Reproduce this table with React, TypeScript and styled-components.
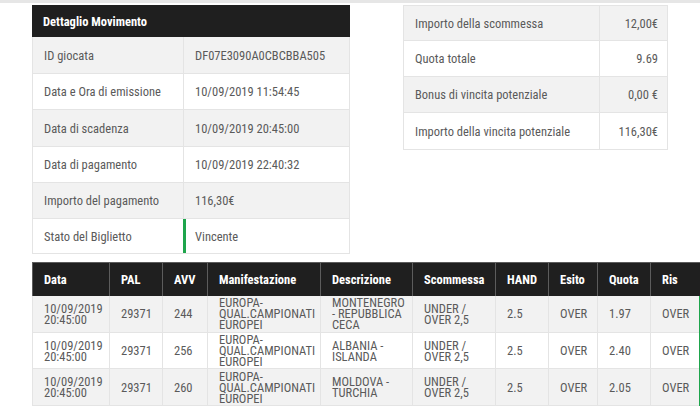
import React from "react";
import styled, { createGlobalStyle } from "styled-components";

const Global = createGlobalStyle`
  html, body { margin: 0; padding: 0; background: #ffffff; }
  body {
    font-family: "Roboto Condensed", "Liberation Sans Narrow", "DejaVu Sans Condensed", Roboto, sans-serif;
    color: #5a5a5a;
    width: 700px;
    height: 417px;
    overflow: hidden;
  }
`;

const Page = styled.div`
  width: 700px;
  height: 417px;
  overflow: hidden;
`;

const TopBand = styled.div`
  height: 3px;
  background: #e6e6e6;
`;

const Top = styled.div`
  display: flex;
  align-items: flex-start;
  gap: 53px;
  padding: 2px 0 0 32px;
`;

const InfoTable = styled.div<{ $width: number }>`
  width: ${(p) => p.$width}px;
  box-sizing: border-box;
  border: 1px solid #e4e4e4;
  border-top: none;
`;

const TitleBar = styled.div`
  height: 32px;
  background: #1f1f1f;
  color: #ffffff;
  font-weight: 700;
  font-size: 12.5px;
  display: flex;
  align-items: center;
  padding-left: 11px;
  margin: 0 -1px;
`;

const InfoRow = styled.div<{ $grey: boolean; $h: number; $cols: string; $first?: boolean }>`
  display: grid;
  grid-template-columns: ${(p) => p.$cols};
  height: ${(p) => p.$h}px;
  background: ${(p) => (p.$grey ? "#f2f2f2" : "#ffffff")};
  border-top: ${(p) => (p.$first ? "1px solid #e4e4e4" : "none")};
  border-bottom: 1px solid #e4e4e4;
  box-sizing: border-box;
  font-size: 12.5px;
  &:last-child { border-bottom: none; }
`;

const InfoCell = styled.div<{ $right?: boolean; $accent?: boolean; $divider?: boolean }>`
  display: flex;
  align-items: center;
  justify-content: ${(p) => (p.$right ? "flex-end" : "flex-start")};
  padding: ${(p) => (p.$right ? "0 9px 0 0" : p.$accent ? "0 0 0 9px" : "0 0 0 11px")};
  border-left: ${(p) => (p.$accent ? "3px solid #1ea54c" : p.$divider ? "1px solid #e4e4e4" : "none")};
  white-space: nowrap;
`;

const Grid = styled.table`
  margin: 8px 0 0 32px;
  border-collapse: collapse;
  table-layout: fixed;
  width: 668px;
  font-size: 12.5px;
`;

const Th = styled.th<{ $w: number }>`
  width: ${(p) => p.$w}px;
  height: 33px;
  box-sizing: border-box;
  background: #1f1f1f;
  color: #ffffff;
  font-weight: 700;
  text-align: left;
  padding: 0 0 0 11px;
  border: 1px solid #5c5c5c;
  border-bottom: none;
  white-space: nowrap;
`;

const Tr = styled.tr<{ $grey: boolean }>`
  background: ${(p) => (p.$grey ? "#f2f2f2" : "#ffffff")};
`;

const Td = styled.td<{ $h: number }>`
  height: ${(p) => p.$h}px;
  box-sizing: border-box;
  padding: 0 6px 0 11px;
  line-height: 11px;
  font-size: 12.5px;
  vertical-align: middle;
  border: 1px solid #e4e4e4;
  border-top: none;
  &:last-child {
    border-right: 3px solid #1ea54c;
  }
`;

const leftRows: [string, string][] = [
  ["ID giocata", "DF07E3090A0CBCBBA505"],
  ["Data e Ora di emissione", "10/09/2019 11:54:45"],
  ["Data di scadenza", "10/09/2019 20:45:00"],
  ["Data di pagamento", "10/09/2019 22:40:32"],
  ["Importo del pagamento", "116,30€"],
  ["Stato del Biglietto", "Vincente"],
];

const rightRows: [string, string][] = [
  ["Importo della scommessa", "12,00€"],
  ["Quota totale", "9.69"],
  ["Bonus di vincita potenziale", "0,00 €"],
  ["Importo della vincita potenziale", "116,30€"],
];

const columns: [string, number][] = [
  ["Data", 77],
  ["PAL", 53],
  ["AVV", 45],
  ["Manifestazione", 113],
  ["Descrizione", 92],
  ["Scommessa", 83],
  ["HAND", 53],
  ["Esito", 49],
  ["Quota", 53],
  ["Ris", 50],
];

const events = [
  { d: "10/09/2019 20:45:00", pal: "29371", avv: "244", man: "EUROPA-QUAL.CAMPIONATI EUROPEI", desc: "MONTENEGRO - REPUBBLICA CECA", q: "1.97" },
  { d: "10/09/2019 20:45:00", pal: "29371", avv: "256", man: "EUROPA-QUAL.CAMPIONATI EUROPEI", desc: "ALBANIA - ISLANDA", q: "2.40" },
  { d: "10/09/2019 20:45:00", pal: "29371", avv: "260", man: "EUROPA-QUAL.CAMPIONATI EUROPEI", desc: "MOLDOVA - TURCHIA", q: "2.05" },
];

const rowHeights = [37, 36, 37];
const leftHeights = [37, 36, 37, 36, 36, 34];

export default function App() {
  return (
    <Page>
      <Global />
      <TopBand />
      <Top>
        <InfoTable $width={318}>
          <TitleBar>Dettaglio Movimento</TitleBar>
          {leftRows.map(([k, v], i) => (
            <InfoRow key={k} $grey={i % 2 === 0} $h={leftHeights[i]} $cols="150px 1fr">
              <InfoCell>{k}</InfoCell>
              <InfoCell $divider={i !== 5} $accent={i === 5}>{v}</InfoCell>
            </InfoRow>
          ))}
        </InfoTable>
        <InfoTable $width={265}>
          {rightRows.map(([k, v], i) => (
            <InfoRow key={k} $grey={i % 2 === 0} $h={36} $cols="195px 1fr" $first={i === 0}>
              <InfoCell>{k}</InfoCell>
              <InfoCell $right $divider>{v}</InfoCell>
            </InfoRow>
          ))}
        </InfoTable>
      </Top>
      <Grid>
        <thead>
          <tr>
            {columns.map(([c, w]) => (
              <Th key={c} $w={w}>{c}</Th>
            ))}
          </tr>
        </thead>
        <tbody>
          {events.map((e, i) => (
            <Tr key={e.avv} $grey={i % 2 === 0}>
              <Td $h={rowHeights[i]}>{e.d}</Td>
              <Td $h={rowHeights[i]}>{e.pal}</Td>
              <Td $h={rowHeights[i]}>{e.avv}</Td>
              <Td $h={rowHeights[i]}>{e.man}</Td>
              <Td $h={rowHeights[i]}>{e.desc}</Td>
              <Td $h={rowHeights[i]}>UNDER / OVER 2,5</Td>
              <Td $h={rowHeights[i]}>2.5</Td>
              <Td $h={rowHeights[i]}>OVER</Td>
              <Td $h={rowHeights[i]}>{e.q}</Td>
              <Td $h={rowHeights[i]}>OVER</Td>
            </Tr>
          ))}
        </tbody>
      </Grid>
    </Page>
  );
}
